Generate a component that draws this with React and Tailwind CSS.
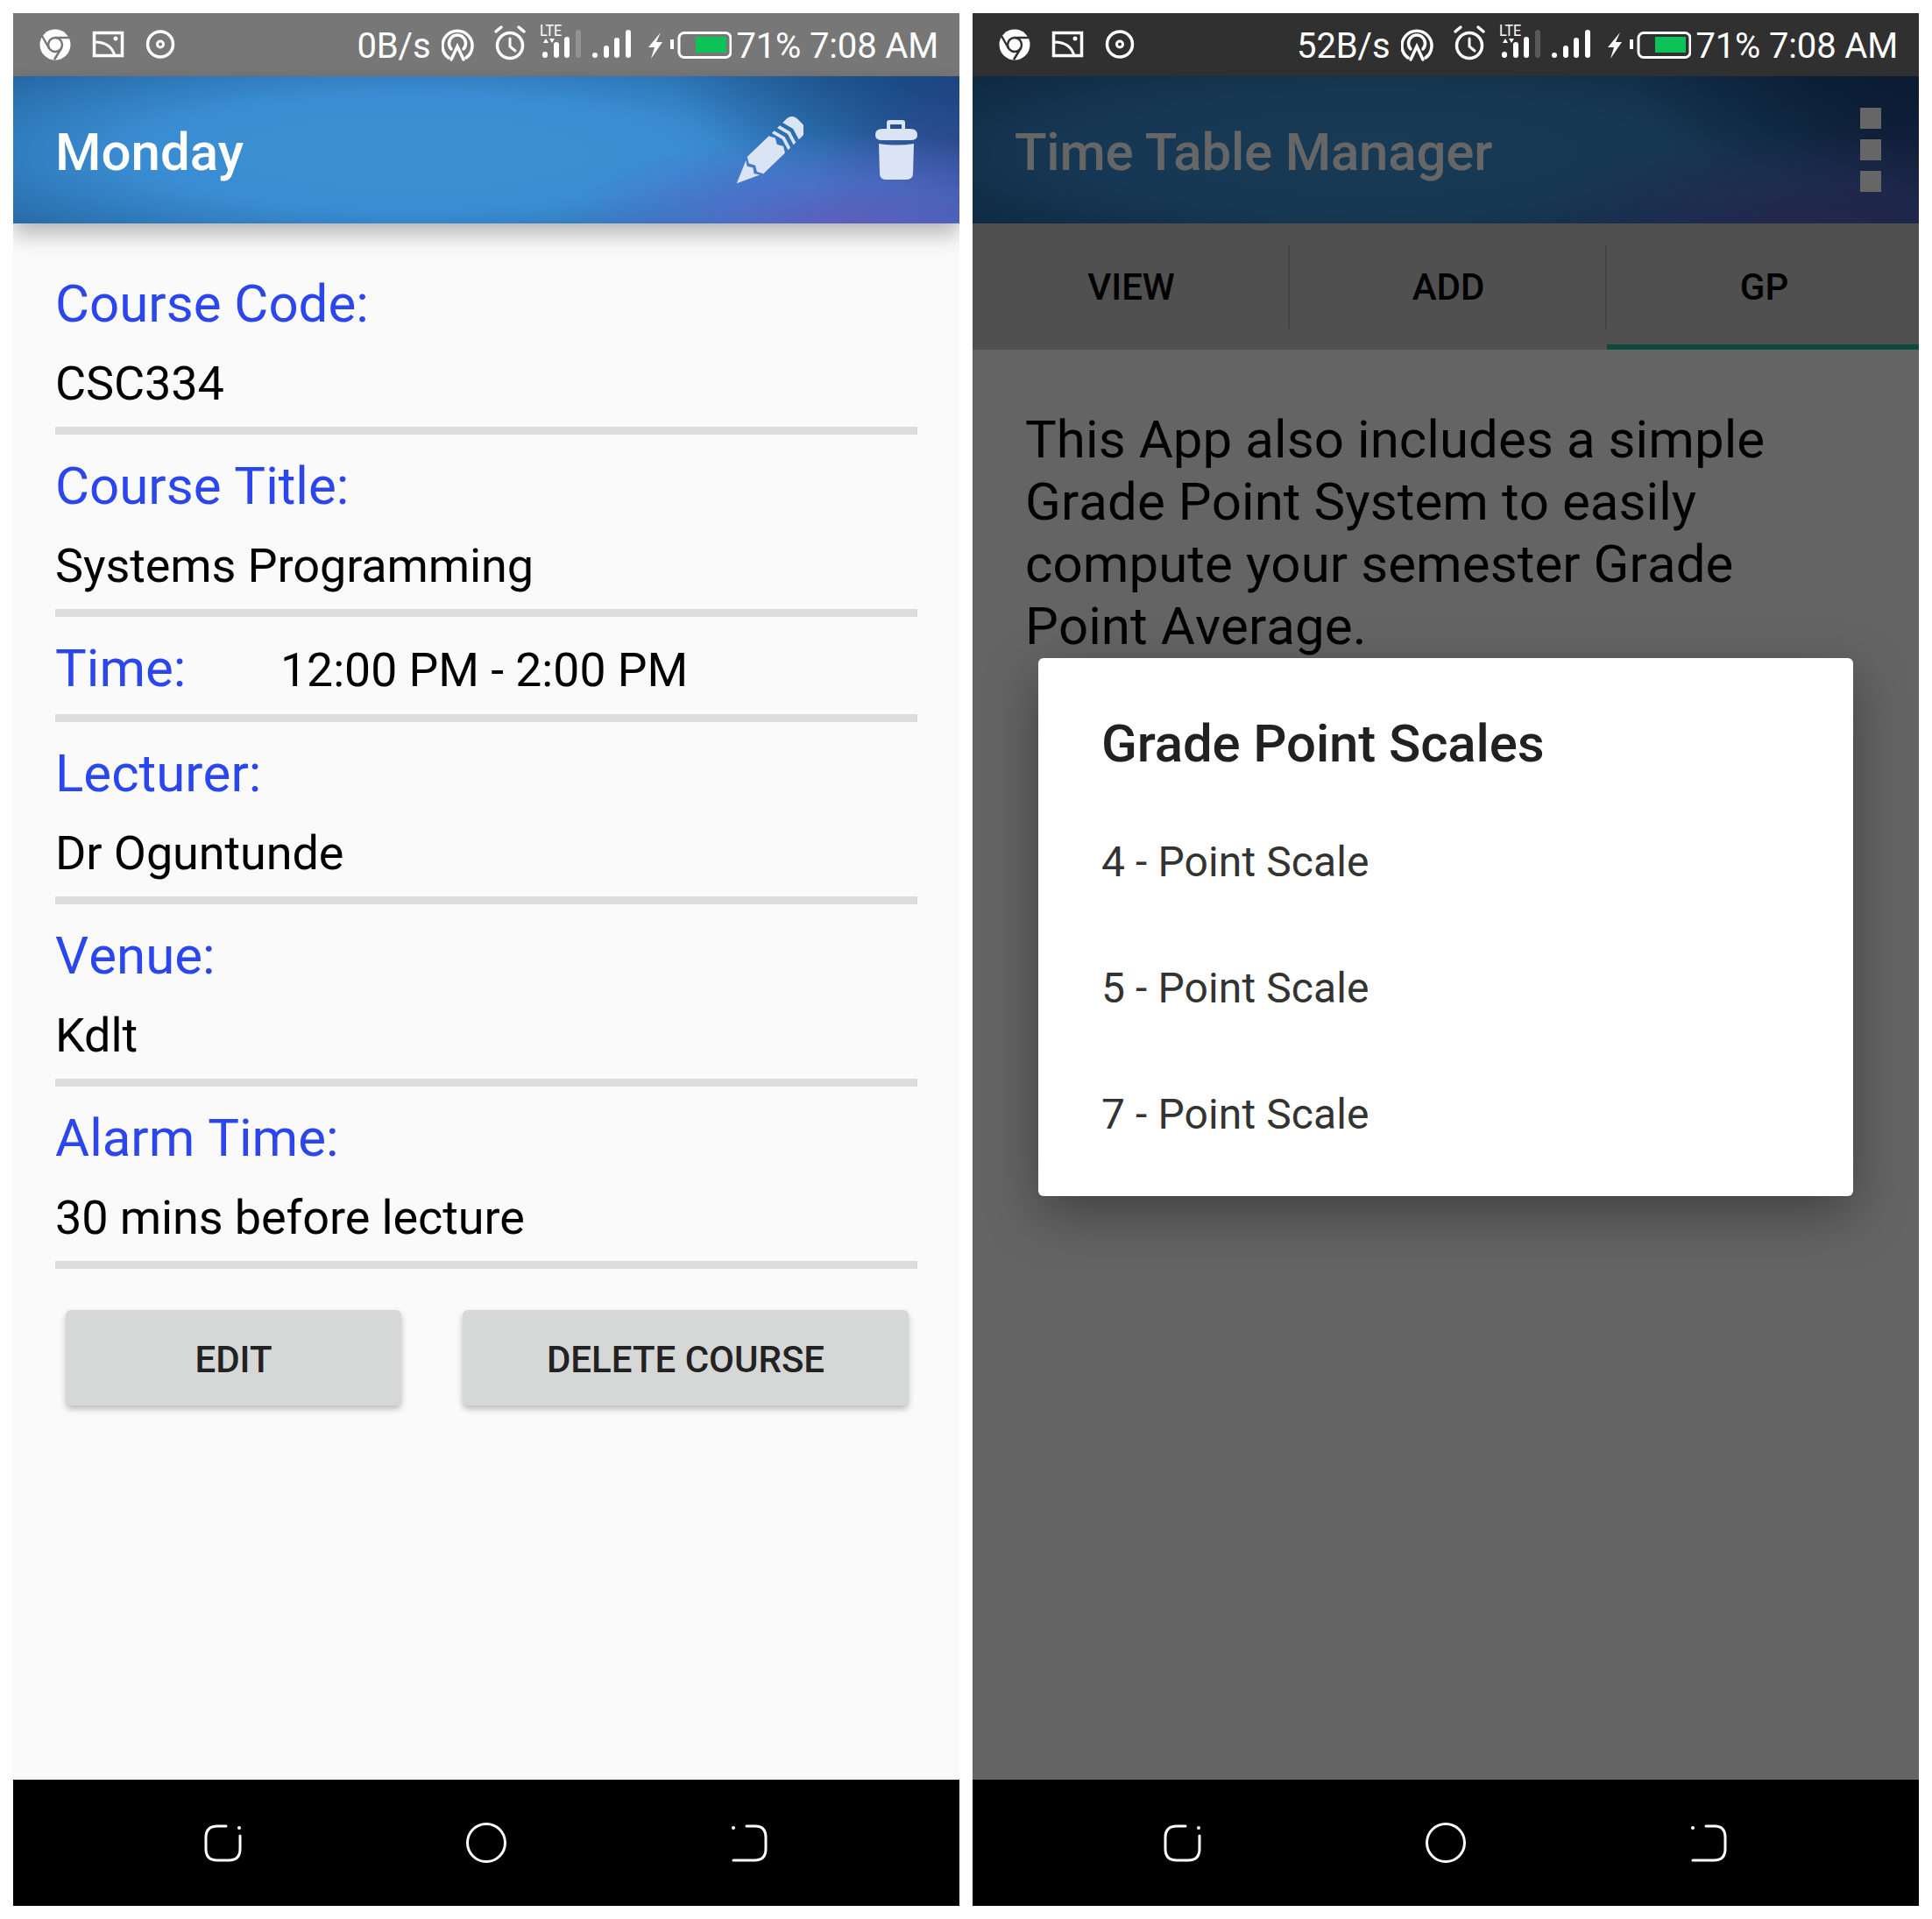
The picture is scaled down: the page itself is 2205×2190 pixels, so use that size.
const fieldRows = [
  { label: "Course Code:", value: "CSC334" },
  { label: "Course Title:", value: "Systems Programming" },
  { label: "Time:", value: "12:00 PM - 2:00 PM", inline: true },
  { label: "Lecturer:", value: "Dr Oguntunde" },
  { label: "Venue:", value: "Kdlt" },
  { label: "Alarm Time:", value: "30 mins before lecture" },
];

const headerBg =
  "bg-[radial-gradient(ellipse_30%_62%_at_88%_100%,rgba(95,95,190,0.95)_0%,rgba(85,110,205,0.7)_45%,rgba(70,130,210,0)_100%),radial-gradient(circle_at_100%_100%,rgba(60,60,140,0.85)_0%,rgba(60,60,140,0)_16%),radial-gradient(ellipse_30%_90%_at_100%_0%,#1a4680_0%,rgba(26,70,128,0)_100%),radial-gradient(ellipse_66%_88%_at_42%_52%,#3c92d1_0%,#3a8cd2_45%,#2a70ae_78%,#1c5a90_100%)]";

function LeftIcons({ bg }) {
  return (
    <svg width="200" height="72" viewBox="0 0 200 72" className="shrink-0">
      {/* chrome */}
      <circle cx="48" cy="36" r="17.5" fill="#fff" />
      <circle cx="48" cy="36" r="8" fill="none" stroke={bg} strokeWidth="2.5" />
      <path d="M48 28 L64 28 M41 40 L33 26 M55 40 L47 53" stroke={bg} strokeWidth="2.5" fill="none" />
      {/* cast */}
      <rect x="92.5" y="22.5" width="32" height="26" fill="none" stroke="#fff" strokeWidth="3.5" />
      <path d="M93 33 Q112 33 116 49" fill="none" stroke="#fff" strokeWidth="3" />
      <circle cx="117" cy="29" r="2.5" fill="#fff" />
      {/* record */}
      <circle cx="168" cy="35.5" r="14.5" fill="none" stroke="#fff" strokeWidth="3.5" />
      <circle cx="168" cy="35.5" r="3.5" fill="none" stroke="#fff" strokeWidth="3" />
    </svg>
  );
}

function RightIcons() {
  return (
    <svg width="331" height="72" viewBox="0 0 331 72" className="shrink-0">
      {/* hotspot */}
      <g fill="none" stroke="#fff" strokeWidth="3.5" strokeLinecap="round">
        <path d="M8 51 A17 17 0 1 1 28 51" />
        <path d="M11 41 A9.5 9.5 0 1 1 25 41" />
        <path d="M11 53 L18 38 L25 53" />
      </g>
      {/* alarm */}
      <g fill="none" stroke="#fff" strokeWidth="3.5" strokeLinecap="round">
        <circle cx="78" cy="37" r="14.5" />
        <path d="M78 29 V38 L84 43" strokeWidth="3" />
        <path d="M62 21 L68 16 M94 21 L88 16" />
      </g>
      {/* lte */}
      <text x="112" y="25.5" fill="#fff" fontSize="18" fontFamily="Roboto, sans-serif" textLength="25" lengthAdjust="spacingAndGlyphs">LTE</text>
      <path d="M116 34 L119 29 L122 34 Z M123 29 L129 29 L126 34 Z" fill="#fff" />
      <rect x="115" y="44" width="6" height="7" rx="3" fill="#fff" />
      <rect x="128" y="33" width="6" height="18" rx="3" fill="#fff" />
      <rect x="140" y="27" width="6" height="24" rx="3" fill="#fff" />
      <rect x="153" y="19" width="6" height="32" rx="3" fill="#fff" fillOpacity="0.2" />
      {/* signal */}
      <rect x="172" y="45" width="6" height="6" rx="3" fill="#fff" />
      <rect x="185" y="37" width="6" height="14" rx="3" fill="#fff" />
      <rect x="197" y="28" width="6" height="23" rx="3" fill="#fff" />
      <rect x="210" y="19" width="6" height="32" rx="3" fill="#fff" />
      {/* charging */}
      <path d="M250 22 L236 39 L243 39 L239 52 L252 33 L245 33 Z" fill="#fff" />
      <rect x="261" y="30" width="4" height="11" fill="#fff" />
      <rect x="271" y="22.5" width="59" height="28" rx="6" fill="none" stroke="#fff" strokeWidth="3" />
      <rect x="290" y="27" width="35" height="18" fill="#0cc35a" />
    </svg>
  );
}

function StatusBar({ bg, speed }) {
  return (
    <div className="h-[72px] flex items-center" style={{ backgroundColor: bg }}>
      <LeftIcons bg={bg} />
      <div className="flex-1 flex items-center justify-end pr-[24px] text-white text-[40px] tracking-[-0.15px]">
        <span className="mr-[13px] pt-[4px]">{speed}</span>
        <RightIcons />
        <span className="ml-[5px] pt-[4px]">71% 7:08 AM</span>
      </div>
    </div>
  );
}

function NavBar() {
  return (
    <div className="h-[144px] shrink-0 bg-black flex items-center justify-center gap-[240px]">
      <svg width="60" height="60" viewBox="0 0 60 60" fill="none" stroke="#fff" strokeWidth="3" strokeLinecap="round">
        <path d="M33 11 H23 Q10 11 10 24 V37 Q10 50 23 50 H36 Q49 50 49 37 V22" />
        <circle cx="48" cy="13" r="2" fill="#fff" stroke="none" />
      </svg>
      <svg width="60" height="60" viewBox="0 0 60 60" fill="none" stroke="#fff" strokeWidth="3">
        <circle cx="30" cy="30" r="21.5" />
      </svg>
      <svg width="60" height="60" viewBox="0 0 60 60" fill="none" stroke="#fff" strokeWidth="3" strokeLinecap="round">
        <path d="M27 11 H37 Q49 11 49 24 V37 Q49 50 36 50 H12" />
        <circle cx="12" cy="13" r="2" fill="#fff" stroke="none" />
      </svg>
    </div>
  );
}

function PencilIcon() {
  return (
    <svg width="80" height="80" viewBox="0 0 84 84" className="shrink-0" fill="#dbe4f4">
      <g transform="translate(4 80) rotate(-44)">
        <path d="M0 0 L27 -12 L23 -6 L27 0 L23 6 L27 12 Z" />
        <path d="M31 -14 L67 -14 L71 -7 L67 0 L71 7 L67 14 L31 14 L27 7 L31 0 L27 -7 Z" />
        <path d="M72 -14 L76 -14 L80 0 L76 14 L72 14 L76 0 Z" />
        <path d="M81 -14 L85 -14 L89 0 L85 14 L81 14 L85 0 Z" />
        <path d="M90 -14 L96 -14 Q106 -14 106 -4 V4 Q106 14 96 14 L90 14 L94 0 Z" />
      </g>
    </svg>
  );
}

function TrashIcon() {
  return (
    <svg width="48" height="68" viewBox="0 0 48 68" className="shrink-0" fill="#dbe4f4">
      <path d="M13 10 V3 Q13 0 16 0 H31 Q34 0 34 3 V10 H30 V5 H17 V10 Z" />
      <path d="M0 17 Q0 10 8 10 H40 Q48 10 48 17 Q48 23 40 23 H8 Q0 23 0 17 Z" />
      <path d="M4 27 Q24 30 44 27 L43 61 Q43 68 35 68 H12 Q5 68 5 61 Z" />
    </svg>
  );
}

function FieldRow({ label, value, inline }) {
  if (inline) {
    return (
      <div className="mb-[17px]">
        <div className="flex items-center h-[84px]">
          <span className="w-[257px] text-[60px] leading-[84px] text-[#2a46ec] [font-kerning:none]">{label}</span>
          <span className="text-[53.5px] leading-[84px] pt-[4px] text-black">{value}</span>
        </div>
        <div className="h-[9px] mt-[10px] bg-[#dcdcdc]" />
      </div>
    );
  }
  return (
    <div className="mb-[17px]">
      <div className="text-[60px] leading-[84px] text-[#2a46ec] [font-kerning:none]">{label}</div>
      <div className="text-[54px] leading-[98px] text-black tracking-[-0.1px]">{value}</div>
      <div className="h-[9px] bg-[#dcdcdc]" />
    </div>
  );
}

function DetailScreen() {
  return (
    <div className="w-[1080px] h-[2160px] flex flex-col bg-[#fafafa] overflow-hidden">
      <StatusBar bg="#777777" speed="0B/s" />
      <div className={`relative z-10 h-[168px] shrink-0 flex items-center pl-[48px] pr-[48px] shadow-[0_12px_24px_rgba(0,0,0,0.28)] ${headerBg}`}>
        <h1 className="flex-1 text-[60px] font-medium text-white pt-[5px]">Monday</h1>
        <div className="mr-[82px] mt-[4px]"><PencilIcon /></div>
        <TrashIcon />
      </div>
      <div className="flex-1 px-[48px] pt-[50px]">
        {fieldRows.map((r) => (
          <FieldRow key={r.label} {...r} />
        ))}
        <div className="flex mt-[47px] pl-[12px] gap-[70px]">
          <button className="w-[383px] h-[109px] pt-[3px] rounded-[6px] bg-[#d6d7d7] text-[42px] font-medium text-[#222] shadow-[0_4px_7px_rgba(0,0,0,0.25)]">EDIT</button>
          <button className="w-[509px] h-[109px] pt-[3px] rounded-[6px] bg-[#d6d7d7] text-[42px] font-medium text-[#222] shadow-[0_4px_7px_rgba(0,0,0,0.25)]">DELETE COURSE</button>
        </div>
      </div>
      <NavBar />
    </div>
  );
}

function GradeScreen() {
  return (
    <div className="relative w-[1080px] h-[2160px] flex flex-col bg-[#fafafa] overflow-hidden">
      <StatusBar bg="#303030" speed="52B/s" />
      <div className="relative flex-1 flex flex-col">
        <div className={`h-[168px] flex items-center justify-between pl-[48px] pr-[43px] ${headerBg}`}>
          <h1 className="text-[60px] font-medium text-white pt-[5px] tracking-[-0.2px]">Time Table Manager</h1>
          <div className="flex flex-col gap-[12px]">
            <div className="w-[24px] h-[24px] bg-white" />
            <div className="w-[24px] h-[24px] bg-white" />
            <div className="w-[24px] h-[24px] bg-white" />
          </div>
        </div>
        <div className="h-[144px] grid grid-cols-[362px_362px_356px] bg-[#c8c8c8]">
          <div className="flex items-center justify-center h-[144px] text-[42px] font-medium text-black relative">
            VIEW
            <span className="absolute right-0 top-[24px] h-[96px] w-[2px] bg-[#aaaaaa]" />
          </div>
          <div className="flex items-center justify-center h-[144px] text-[42px] font-medium text-black relative">
            ADD
            <span className="absolute right-0 top-[24px] h-[96px] w-[2px] bg-[#aaaaaa]" />
          </div>
          <div className="flex items-center justify-center h-[144px] pl-[3px] text-[42px] font-medium text-black shadow-[inset_0_-6px_0_#20b89a]">GP</div>
        </div>
        <p className="pl-[60px] pr-[100px] pt-[67px] text-[60px] leading-[71px] tracking-[0.07px] text-black [font-kerning:none]">
          This App also includes a simple Grade Point System to easily compute your semester Grade Point Average.
        </p>
        {/* scrim */}
        <div className="absolute inset-0 bg-black/60" />
      </div>
      <NavBar />
      {/* dialog */}
      <div className="absolute left-[75px] top-[736px] w-[930px] h-[614px] rounded-[6px] bg-white shadow-[0_20px_60px_rgba(0,0,0,0.35)] pl-[72px] pt-[54px]">
        <h2 className="text-[60px] leading-[88px] font-medium text-[#212121] tracking-[-0.15px]">Grade Point Scales</h2>
        <div className="mt-[19px] flex flex-col text-[48px] leading-[144px] tracking-[0.1px] text-[#333333]">
          <span>4 - Point Scale</span>
          <span>5 - Point Scale</span>
          <span>7 - Point Scale</span>
        </div>
      </div>
    </div>
  );
}

export default function App() {
  return (
    <div className="w-[2205px] h-[2190px] bg-white p-[15px] flex gap-[15px] font-['Roboto',sans-serif]">
      <DetailScreen />
      <GradeScreen />
    </div>
  );
}
